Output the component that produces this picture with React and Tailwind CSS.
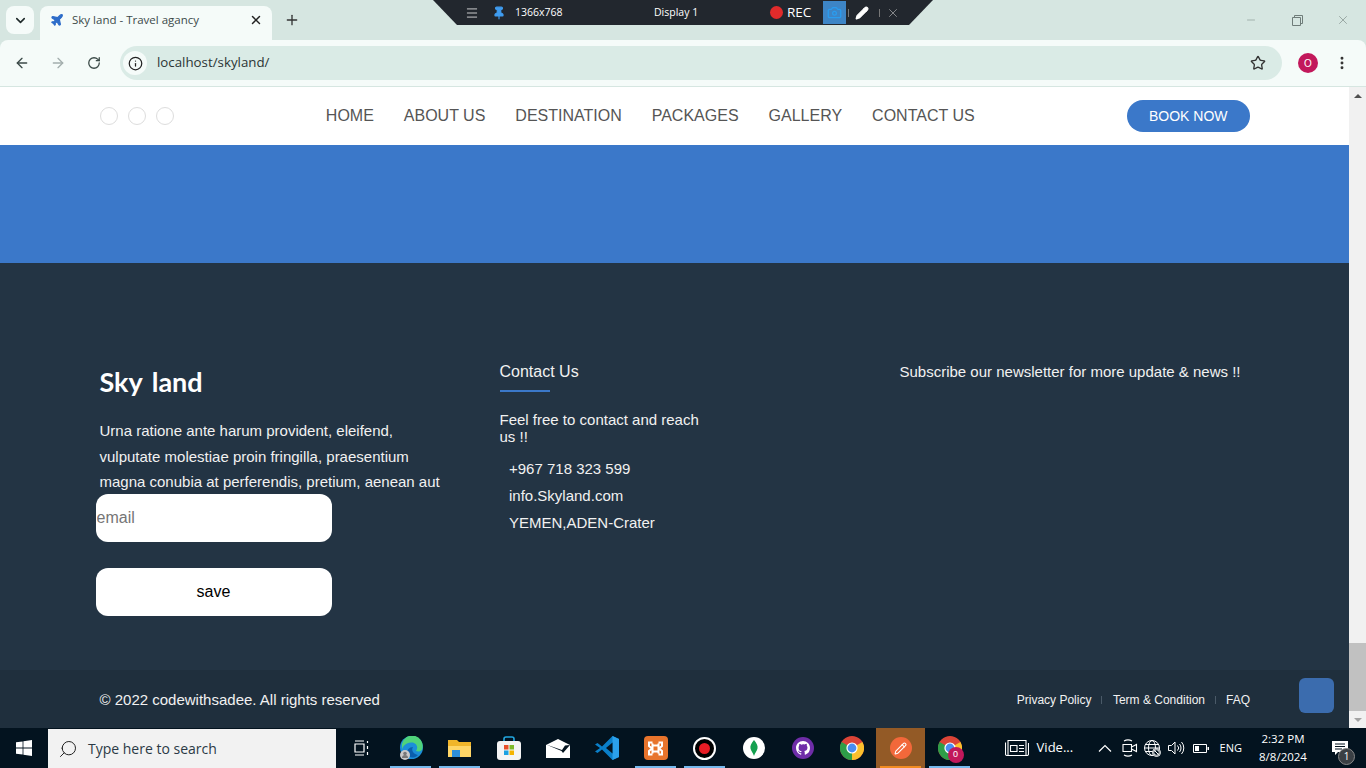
import React from 'react';
import {
    ChevronDown, X, Plus, ArrowLeft, ArrowRight, RotateCw, Info, Star, EllipsisVertical,
    Minus, Plane, Menu, Pin, Camera, Pencil, Search,
} from 'lucide-react';

const navItems = ['HOME', 'ABOUT US', 'DESTINATION', 'PACKAGES', 'GALLERY', 'CONTACT US'];

const TaskSlot = ({ children, line, active }) => (
    <div className={`relative w-[49px] h-10 flex items-center justify-center ${active ? 'bg-[#935a26]' : ''}`}>
        {children}
        {line && <div className={`absolute bottom-0 left-1 right-1 h-[2px] ${active ? 'bg-[#f28b20] left-0 right-0' : 'bg-[#76b9ed]'}`} />}
    </div>
);

const ChromeIcon = () => (
    <svg width="24" height="24" viewBox="0 0 24 24">
        <circle cx="12" cy="12" r="12" fill="#db4437" />
        <path d="M12 12 L22.4 6 A12 12 0 0 1 12 24 Z" fill="#fbc02d" />
        <path d="M12 12 L12 24 A12 12 0 0 1 1.6 6 Z" fill="#2e9e48" />
        <circle cx="12" cy="12" r="5.6" fill="#fff" />
        <circle cx="12" cy="12" r="4.4" fill="#4a8df0" />
    </svg>
);

const Taskbar = () => (
    <div className="h-10 bg-[#03131f] flex items-center text-white shrink-0">
        {/* start */}
        <div className="w-12 h-10 flex items-center justify-center">
            <svg width="16" height="16" viewBox="0 0 16 16" fill="#fff">
                <path d="M0 2.3 6.6 1.4V7.5H0ZM7.4 1.3 16 0V7.5H7.4ZM0 8.4H6.6V14.6L0 13.7ZM7.4 8.4H16V16L7.4 14.7Z" />
            </svg>
        </div>
        <div className="w-[288px] h-[39px] mt-px bg-[#f2f2f2] flex items-center pl-[10px] gap-[10px] text-[#2b3a45] text-[14px] [font-family:'Open_Sans',sans-serif]">
            <Search size={20} strokeWidth={1.2} className="-scale-x-100 text-[#222]" />
            <span>Type here to search</span>
        </div>
        <div className="w-px" />
        <TaskSlot>
            <svg width="16" height="16" viewBox="0 0 16 16" fill="none" stroke="#fff" strokeWidth="1.2">
                <path d="M1 1H10M1 15H10M1 4H10V12H1ZM13.5 1V3M13.5 6V9M13.5 12V15" />
            </svg>
        </TaskSlot>
        <TaskSlot line>
            <svg width="24" height="24" viewBox="0 0 24 24">
                <circle cx="12.5" cy="11.5" r="11.5" fill="#1c8fd8" />
                <path d="M3 8A10 10 0 0 1 23.5 12C23.5 15 20 16 17 15C20 11 17 6 12 6.500C7 7 3.500 10 3 14Z" fill="#4fd37a" />
                <path d="M8 18A6 6 0 0 1 14 11C12 14 14 18 19 19C15 23 10 22 8 18Z" fill="#0b5fae" />
                <circle cx="6" cy="19" r="5" fill="#c9c9c9" />
                <circle cx="6" cy="17.500" r="1.800" fill="#777" />
                <path d="M3 22A3 3 0 0 1 9 22Z" fill="#777" />
            </svg>
        </TaskSlot>
        <TaskSlot line>
            <svg width="24" height="20" viewBox="0 0 24 20">
                <path d="M0 2H9L11 4H23V19H0Z" fill="#f0b52a" />
                <path d="M0 8H23V19H0Z" fill="#ffd667" />
                <path d="M4 12H12V19H4Z" fill="#2f8fd8" />
            </svg>
        </TaskSlot>
        <TaskSlot>
            <svg width="24" height="24" viewBox="0 0 24 24">
                <path d="M7 6V3A2 2 0 0 1 9 1H15A2 2 0 0 1 17 3V6" fill="none" stroke="#22a7e0" strokeWidth="1.600" />
                <rect x="0" y="5" width="24" height="19" rx="3" fill="#f4f4f4" />
                <rect x="7" y="9" width="4.500" height="4.500" fill="#e8502a" />
                <rect x="12.500" y="9" width="4.500" height="4.500" fill="#7eba2a" />
                <rect x="7" y="14.500" width="4.500" height="4.500" fill="#1ba1e2" />
                <rect x="12.500" y="14.500" width="4.500" height="4.500" fill="#f4b400" />
            </svg>
        </TaskSlot>
        <TaskSlot>
            <svg width="24" height="19" viewBox="0 0 24 19">
                <path d="M0 6 12 0 24 6V19H0Z" fill="#fff" />
                <path d="M0 5.500 16 11 19 6.500 24 6 17 14 15.500 12Z" fill="#03131f" />
            </svg>
        </TaskSlot>
        <TaskSlot>
            <svg width="24" height="24" viewBox="0 0 24 24">
                <path d="M17.500 0 24 3V21L17.500 24 7 13.500 2.500 17 0 15.500 5 12 0 8.500 2.500 7 7 10.500Z" fill="#0a7fc9" />
                <path d="M17.500 0 24 3V21L17.500 24Z" fill="#2ba0ea" />
                <path d="M17.500 6.500 11 12 17.500 17.500Z" fill="#03131f" />
            </svg>
        </TaskSlot>
        <TaskSlot line>
            <div className="w-6 h-6 rounded-sm bg-[#e8742c] flex items-center justify-center">
                <svg width="17" height="15" viewBox="0 0 17 15" fill="none" stroke="#fff" strokeWidth="2">
                    <path d="M5.500 4.500H11.500M5.500 10.500H11.500M5.500 2.500V12.500M11.500 2.500V12.500M5.500 1.500H2V5L5 7.500 2 10V13.500H5.500M11.500 1.500H15V5L12 7.500 15 10V13.500H11.500" />
                </svg>
            </div>
        </TaskSlot>
        <TaskSlot line>
            <div className="w-[23px] h-[23px] rounded-full border-2 border-white bg-black flex items-center justify-center">
                <div className="w-[11px] h-[11px] rounded-full bg-[#e81c24]" />
            </div>
        </TaskSlot>
        <TaskSlot>
            <div className="w-[22px] h-[22px] rounded-full bg-white flex items-center justify-center">
                <svg width="8" height="16" viewBox="0 0 8 16"><path d="M4 0C7 3.500 8 6 7.500 8.500 7 11 5 12.500 4 16 3 12.500 1 11 .5 8.500 0 6 1 3.500 4 0Z" fill="#13a04f" /></svg>
            </div>
        </TaskSlot>
        <TaskSlot>
            <div className="w-[22px] h-[22px] rounded-full bg-[#6f2da8] flex items-center justify-center">
                <svg width="14" height="14" viewBox="0 0 16 16" fill="#fff">
                    <path d="M8 0C3.580 0 0 3.580 0 8c0 3.540 2.290 6.530 5.470 7.590.4.070.55-.17.55-.38v-1.340c-2.220.48-2.690-1.070-2.690-1.070-.36-.92-.89-1.170-.89-1.170-.73-.5.050-.49.050-.49.800.06 1.230.82 1.230.82.720 1.220 1.870.87 2.330.66.070-.52.28-.87.510-1.070-1.780-.2-3.640-.89-3.640-3.950 0-.87.310-1.590.820-2.150-.08-.2-.36-1.020.08-2.120 0 0 .67-.21 2.200.82A7.600 7.600 0 0 1 8 3.850c.68 0 1.360.09 2 .27 1.530-1.040 2.200-.82 2.200-.82.440 1.100.16 1.920.08 2.120.51.560.82 1.270.82 2.150 0 3.070-1.870 3.750-3.650 3.950.29.250.54.730.54 1.480v2.200c0 .21.15.46.55.38A8 8 0 0 0 16 8c0-4.420-3.580-8-8-8Z" />
                </svg>
            </div>
        </TaskSlot>
        <TaskSlot><ChromeIcon /></TaskSlot>
        <TaskSlot line active>
            <div className="w-[22px] h-[22px] rounded-full bg-[#f2683a] flex items-center justify-center">
                <Pencil size={13} strokeWidth={2} className="text-white" />
            </div>
        </TaskSlot>
        <TaskSlot line>
            <div className="relative">
                <ChromeIcon />
                <div className="absolute -right-[2px] -bottom-[3px] w-4 h-4 rounded-full bg-[#c2185b] text-[9px] text-white flex items-center justify-center">0</div>
            </div>
        </TaskSlot>

        {/* tray */}
        <div className="ml-auto flex items-center h-10 [font-family:'Open_Sans',sans-serif]">
            <svg width="24" height="16" viewBox="0 0 24 16" fill="none" stroke="#fff" strokeWidth="1.1">
                <path d="M.5 2.500V14A1.500 1.500 0 0 0 2 15.500H22A1.500 1.500 0 0 0 23.500 14V3M3 15V.5H21V15" />
                <path d="M5.500 5.500H12V11.500H5.500ZM14 5.500H19M14 8.500H19M14 11.500H19" />
            </svg>
            <span className="ml-2 w-[59px] text-[13px]">Vide...</span>
            <svg width="14" height="8" viewBox="0 0 14 8" fill="none" stroke="#fff" strokeWidth="1.2" className="ml-[2px]">
                <path d="M1 7.500 7 1.500 13 7.500" />
            </svg>
            {/* meet now */}
            <svg width="16" height="20" viewBox="0 0 16 20" fill="none" stroke="#fff" strokeWidth="1.1" className="ml-[10px]">
                <path d="M1 6.500H9.500V13.500H1ZM9.500 9 14.500 6.500V13.500L9.500 11" />
                <path d="M2 3A8 8 0 0 1 10 3M2 17A8 8 0 0 0 10 17" />
            </svg>
            {/* globe with blocked badge */}
            <svg width="17" height="17" viewBox="0 0 17 17" fill="none" stroke="#fff" strokeWidth="1" className="ml-[6px]">
                <circle cx="8" cy="8" r="7.500" />
                <ellipse cx="8" cy="8" rx="3.500" ry="7.500" />
                <path d="M.5 8H15.500M1.500 4.500H14.500M1.500 11.500H14.500" />
                <circle cx="12.500" cy="12.500" r="4" fill="#03131f" />
                <path d="M10.500 10.500 14.500 14.500" />
                <circle cx="12.500" cy="12.500" r="2.800" />
            </svg>
            {/* speaker */}
            <svg width="17" height="14" viewBox="0 0 17 14" fill="none" stroke="#fff" strokeWidth="1" className="ml-[7px]">
                <path d="M.5 4.500H3.500L7 1V13L3.500 9.500H.5ZM9.500 4.500A3.500 3.500 0 0 1 9.500 9.500M11.500 3A6 6 0 0 1 11.500 11M13.500 1A9 9 0 0 1 13.500 13" />
            </svg>
            {/* battery */}
            <svg width="16" height="9" viewBox="0 0 16 9" className="ml-[8px]">
                <path d="M.5.5H13.500V8.500H.5Z" fill="none" stroke="#fff" />
                <path d="M2 2H6V7H2ZM14.500 3H16V6H14.500Z" fill="#fff" />
            </svg>
            <span className="ml-[11px] text-[11px]">ENG</span>
            <div className="w-[62px] ml-[10px] text-center text-[11.5px] leading-[18px]">
                <div>2:32 PM</div>
                <div>8/8/2024</div>
            </div>
            <div className="relative w-[52px] h-10 flex items-center justify-center">
                <svg width="16" height="14" viewBox="0 0 16 14" fill="#fff">
                    <path d="M0 0H16V11H6L3 14V11H0Z" />
                    <path d="M3 3H13M3 5.500H13M3 8H10" stroke="#03131f" />
                </svg>
                <div className="absolute left-[24px] top-[20px] w-[17px] h-[17px] rounded-full bg-[#3a3f44] border border-[#888] text-[10px] flex items-center justify-center">1</div>
            </div>
        </div>
    </div>
);

// screen recorder bar that floats over the browser
const RecorderBar = () => (
    <div className="absolute left-[433px] top-0 w-[500px] h-[25px] bg-[#22272e] [clip-path:polygon(0_0,100%_0,95.2%_100%,4.8%_100%)] flex items-center text-white text-[10.5px] [font-family:'Open_Sans',sans-serif]">
        <Menu size={14} strokeWidth={1.3} className="ml-[32px] text-white" />
        <Pin size={14} strokeWidth={2} className="ml-[13px] text-[#3f9cf0] fill-[#3f9cf0]" />
        <span className="ml-[9px] w-[139px]">1366x768</span>
        <span className="w-[116px]">Display 1</span>
        <div className="w-[13px] h-[13px] rounded-full bg-[#e02b2b]" />
        <span className="ml-[4px] w-[26px] text-[13.5px]">REC</span>
        <div className="ml-[10px] w-[23px] h-[23px] bg-[#3d85c6] flex items-center justify-center">
            <Camera size={15} className="text-[#2a9df0]" />
        </div>
        <div className="w-px h-2 bg-[#777] ml-[2px]" />
        <Pencil size={14} className="ml-[6px] fill-white" />
        <div className="w-px h-2 bg-[#777] ml-[10px]" />
        <X size={14} strokeWidth={1} className="ml-[6px] text-[#ccc]" />
    </div>
);

const App = () => {
    return (
        <div className="relative w-[1366px] h-[768px] overflow-hidden flex flex-col bg-[#d6e6e1] [font-family:'Liberation_Sans',Arial,sans-serif]">
            {/* tab strip */}
            <div className="h-10 bg-[#d6e6e1] flex items-end shrink-0 text-[#1f2a2a]">
                <div className="ml-[6px] mb-[6px] w-7 h-7 rounded-lg bg-[#f5fbf9] flex items-center justify-center">
                    <ChevronDown size={15} strokeWidth={2.5} />
                </div>
                <div className="ml-[6px] w-[232px] h-[34px] pb-[6px] bg-[#f5fbf9] rounded-t-lg flex items-center pl-[10px] text-[11.5px] text-[#3c4a4a] [font-family:'Open_Sans',sans-serif]">
                    <Plane size={14} className="text-[#2d6cc9] fill-[#2d6cc9]" />
                    <span className="ml-[8px] w-[177px]">Sky land - Travel agancy</span>
                    <X size={14} strokeWidth={2.5} className="text-[#222]" />
                </div>
                <Plus size={16} strokeWidth={2} className="ml-[12px] mb-[12px] text-[#333]" />
                <div className="ml-auto h-10 flex items-center text-[#6f7c79]">
                    <div className="w-[46px] flex justify-center"><Minus size={12} strokeWidth={1} /></div>
                    <div className="w-[46px] flex justify-center">
                        <svg width="11" height="11" viewBox="0 0 11 11" fill="none" stroke="currentColor">
                            <path d="M.5 2.500H8.500V10.500H.5ZM2.500 2.500V.5H10.500V8.500H8.500" />
                        </svg>
                    </div>
                    <div className="w-[46px] flex justify-center"><X size={14} strokeWidth={1} /></div>
                </div>
            </div>

            {/* toolbar */}
            <div className="h-[47px] bg-[#f5fbf9] border-b border-[#d6e6e1] rounded-t-lg flex items-center shrink-0 text-[#3b4a48]">
                <ArrowLeft size={16} strokeWidth={2} className="ml-[14px]" />
                <ArrowRight size={16} strokeWidth={2} className="ml-5 text-[#a3aead]" />
                <RotateCw size={14} strokeWidth={2.2} className="ml-[21px]" />
                <div className="ml-[19px] w-[1162px] h-[34px] rounded-full bg-[#daebe6] flex items-center pl-[3px]">
                    <div className="w-6 h-6 rounded-full bg-[#f5fbf9] flex items-center justify-center">
                        <Info size={15} strokeWidth={2} className="text-[#222]" />
                    </div>
                    <span className="ml-[10px] text-[13.3px] text-[#2b3535] [font-family:'Open_Sans',sans-serif]">localhost/skyland/</span>
                    <Star size={16} strokeWidth={2} className="ml-auto mr-[16px] text-[#333]" />
                </div>
                <div className="ml-[16px] w-5 h-5 rounded-full bg-[#c2185b] text-white text-[10px] flex items-center justify-center">O</div>
                <EllipsisVertical size={16} strokeWidth={2.4} className="ml-[16px] text-[#333]" />
            </div>

            {/* page */}
            <div className="flex-1 flex min-h-0">
                <div className="w-[1349px] flex flex-col">
                    {/* navbar */}
                    <div className="h-[58px] bg-white flex items-center justify-between pl-[99.5px] pr-[99.5px] shrink-0">
                        <div className="flex gap-[10px]">
                            <div className="w-[18px] h-[18px] rounded-full border border-[#ddd]" />
                            <div className="w-[18px] h-[18px] rounded-full border border-[#ddd]" />
                            <div className="w-[18px] h-[18px] rounded-full border border-[#ddd]" />
                        </div>
                        <div className="flex gap-[30px] text-base text-[#555]">
                            {navItems.map((item) => <span key={item}>{item}</span>)}
                        </div>
                        <button className="h-8 px-[22px] rounded-full bg-[#3b78c9] text-white text-sm">BOOK NOW</button>
                    </div>

                    {/* blue band */}
                    <div className="h-[118px] bg-[#3b78c9] shrink-0" />

                    {/* footer top */}
                    <div className="h-[407px] bg-[#233444] pl-[99.5px] pt-[100px] grid grid-cols-[400px_400px_1fr] text-[#f1f1f1] text-[15px] shrink-0">
                        <div>
                            <h2 className="-mt-px text-[27px] leading-[40px] [word-spacing:3px] font-bold text-white [font-family:Lato,sans-serif]">Sky land</h2>
                            <p className="mt-[16px] w-[345px] leading-[25.5px]">
                                Urna ratione ante harum provident, eleifend, vulputate molestiae proin fringilla, praesentium magna conubia at perferendis, pretium, aenean aut
                            </p>
                            <input
                                placeholder="email"
                                className="block mt-[-1px] -ml-1 w-[236px] h-12 px-px bg-white rounded-xl text-base placeholder:text-[#757575]"
                            />
                            <button className="block mt-[26px] -ml-1 w-[236px] h-12 bg-white rounded-xl text-base text-black">save</button>
                        </div>
                        <div>
                            <h3 className="text-base leading-[18px] text-[#f1f1f1]">Contact Us</h3>
                            <div className="mt-[9px] w-[50px] h-[2px] bg-[#3b78c9]" />
                            <p className="mt-[19px] w-[210px] leading-[17px]">Feel free to contact and reach us !!</p>
                            <ul className="mt-[10px] pl-[9.5px] leading-[27px]">
                                <li>+967 718 323 599</li>
                                <li>info.Skyland.com</li>
                                <li>YEMEN,ADEN-Crater</li>
                            </ul>
                        </div>
                        <div className="leading-[18px]">
                            <p>Subscribe our newsletter for more update &amp; news !!</p>
                        </div>
                    </div>

                    {/* footer bottom */}
                    <div className="relative flex-1 bg-[#1f2f3d] flex items-center justify-between pl-[99.5px] pr-[99px] text-[#f1f1f1]">
                        <span className="text-[15px] pt-[2px]">© 2022 codewithsadee. All rights reserved</span>
                        <div className="flex items-center text-xs pt-[2px]">
                            <span>Privacy Policy</span>
                            <div className="w-px h-2 bg-[#4a5a68] ml-[10px] mr-[10.500px]" />
                            <span>Term &amp; Condition</span>
                            <div className="w-px h-2 bg-[#4a5a68] mx-[10px]" />
                            <span>FAQ</span>
                        </div>
                        <div className="absolute left-[1299px] top-[8px] w-[35px] h-[35px] rounded-md bg-[#3b6cae]" />
                    </div>
                </div>

                {/* scrollbar */}
                <div className="w-[17px] bg-[#f1f1f1] flex flex-col items-center">
                    <div className="h-[17px] flex items-center justify-center">
                        <div className="w-0 h-0 border-x-[4px] border-x-transparent border-b-[4px] border-b-[#505050]" />
                    </div>
                    <div className="flex-1" />
                    <div className="w-full h-[68px] bg-[#c1c1c1]" />
                    <div className="h-[17px] flex items-center justify-center">
                        <div className="w-0 h-0 border-x-[4px] border-x-transparent border-t-[4px] border-t-[#a3a3a3]" />
                    </div>
                </div>
            </div>

            <Taskbar />
            <RecorderBar />
        </div>
    );
};

export default App;
